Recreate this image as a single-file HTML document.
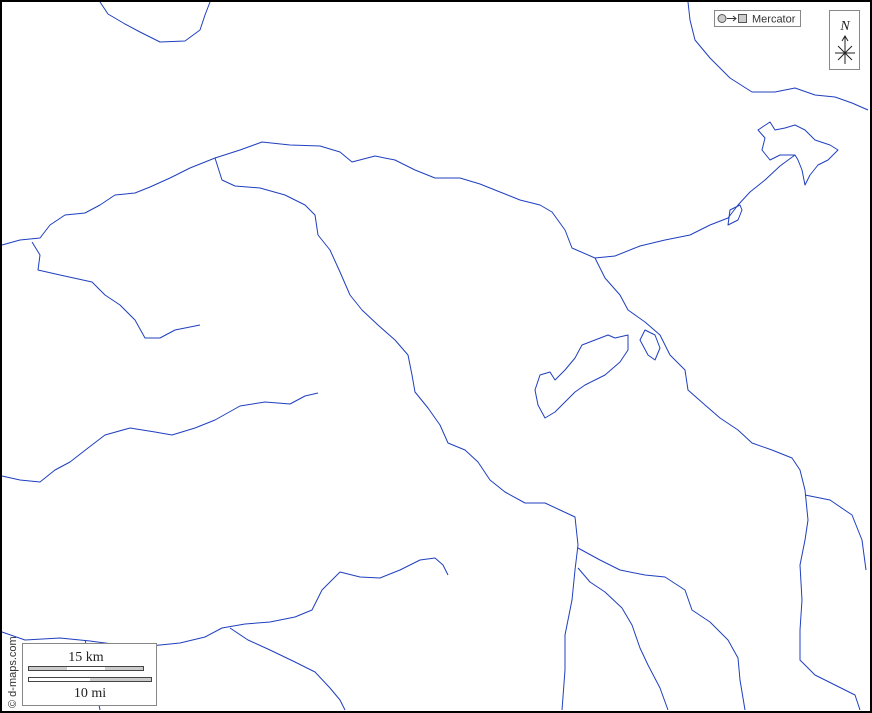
<!DOCTYPE html>
<html><head><style>
html,body{margin:0;padding:0;background:#fff}
#m{position:relative;width:872px;height:713px;overflow:hidden;font-family:"Liberation Sans",sans-serif}
</style></head><body><div id="m">
<svg width="872" height="713" viewBox="0 0 872 713" style="position:absolute;left:0;top:0">
<g fill="none" stroke="#1f3fbf" stroke-width="1" stroke-linejoin="round">
<polyline points="100,2 108,14 125,24 140,32 160,42 185,41 200,30 205,15 210,2"/>
<polyline points="688,2 690,20 695,40 710,58 730,78 752,92 775,92 795,88 815,95 835,97 852,103 868,110"/>
<polyline points="2,245 20,240 40,238 50,225 65,215 85,213 100,205 115,195 135,193 150,187 170,178 190,168 215,158 240,150 262,142 290,145 320,146 340,152 352,162 375,156 395,160 415,170 435,178 460,178 480,184 500,192 520,200 540,205 552,212 565,230 572,248 595,258 615,256 640,246 665,240 690,235 710,225 728,218 738,205 750,192 765,180 780,166 795,155"/>
<polyline points="215,158 222,180 235,186 260,188 285,195 305,205 315,215 318,235 330,250 340,272 350,295 362,310 378,325 395,340 408,355 412,375 415,392 428,408 440,425 448,443 465,450 478,462 490,480 505,492 525,503 545,503 560,510 575,517 578,545 575,570 572,600 565,635 565,670 562,710"/>
<polyline points="595,258 605,278 620,295 628,310 645,322 660,335 670,355 685,370 688,390 705,405 720,418 738,430 752,443 772,450 792,458 800,470 805,490 808,520 805,540 800,565 802,600 800,630 800,660 815,675 835,685 855,695 860,710"/>
<polyline points="805,495 830,500 852,515 862,540 866,570"/>
<polyline points="32,242 40,255 38,270 60,275 92,282 105,295 120,305 135,320 145,338 160,338 175,330 200,325"/>
<polyline points="2,476 20,480 40,482 55,470 70,462 88,448 105,435 130,428 155,432 172,435 195,428 215,420 240,406 265,402 290,404 305,396 318,393"/>
<polyline points="2,632 25,640 60,638 90,641 120,645 150,646 180,643 205,637 222,628 245,624 270,622 295,617 312,610 322,590 340,572 360,577 380,578 400,570 420,560 435,558 443,565 448,575"/>
<polyline points="230,628 248,640 270,650 295,662 315,672 330,688 340,700 345,710"/>
<polyline points="578,548 600,560 620,570 645,575 665,577 685,590 692,610 710,622 728,640 738,658 740,680 745,710"/>
<polyline points="578,568 590,582 605,592 622,608 632,625 640,648 648,665 660,688 668,710"/>
<polyline points="85,640 90,660 92,685 98,700 100,710"/>
<path d="M795,155 L780,155 770,160 762,150 765,138 758,130 770,122 775,130 785,128 795,125 805,130 815,140 830,145 838,150 828,160 818,165 810,175 805,185 802,170 798,160 Z"/>
<path d="M545,418 L538,405 535,390 540,375 550,372 555,380 565,370 575,358 582,345 595,340 608,335 615,338 628,335 628,350 620,362 605,375 595,380 585,385 575,392 565,402 555,412 Z"/>
<path d="M645,330 L640,340 648,355 655,360 660,348 655,335 Z"/>
<path d="M740,205 L730,210 728,225 738,220 742,210 Z"/>
</g>
<rect x="1" y="1" width="870" height="711" fill="none" stroke="#000" stroke-width="2"/>
<rect x="714.5" y="10.5" width="86" height="16" fill="#fff" stroke="#888"/>
<circle cx="722" cy="18.5" r="4" fill="#ccc" stroke="#555"/>
<path d="M727,18.5 H736 M733,16 L736,18.5 733,21" stroke="#333" fill="none"/>
<rect x="738.5" y="14.5" width="8" height="8" fill="#ccc" stroke="#555"/>
<text x="752" y="22.5" font-size="11" fill="#333">Mercator</text>
<rect x="829.5" y="10.5" width="30" height="59" fill="#fff" stroke="#888"/>
<text x="845" y="30" font-size="14" font-style="italic" font-family="Liberation Serif" text-anchor="middle" fill="#222">N</text>
<g stroke="#222" stroke-width="1" fill="none"><path d="M845,36 V64 M842,41 L845,36 848,41 M835,53 H855 M838,46 L852,60 M852,46 L838,60"/></g>
<rect x="22.5" y="643.5" width="134" height="62" fill="#fff" stroke="#888"/>
<text x="86" y="661" font-size="14" font-family="Liberation Serif" text-anchor="middle" fill="#222">15 km</text>
<rect x="28.5" y="666.5" width="115" height="4" fill="#ccc" stroke="#444"/>
<rect x="67" y="667" width="38" height="3" fill="#fff"/>
<rect x="28.5" y="677.5" width="123" height="4" fill="#ccc" stroke="#444"/>
<rect x="29" y="678" width="61" height="3" fill="#fff"/>
<text x="90" y="697" font-size="14" font-family="Liberation Serif" text-anchor="middle" fill="#222">10 mi</text>
<text transform="translate(16,708) rotate(-90)" font-size="11" fill="#333">© d-maps.com</text>
</svg>
</div></body></html>
